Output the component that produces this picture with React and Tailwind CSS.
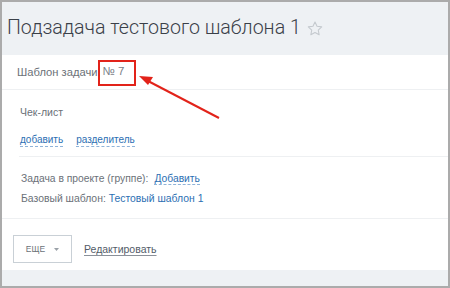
import React from "react";

export default function App() {
  return (
    <div className="relative w-[450px] h-[288px] box-border border-2 border-[#ababab] bg-[#eef1f4] flex flex-col overflow-hidden" style={{ fontFamily: '"Liberation Sans", Arial, sans-serif' }}>
      <div className="h-[53px] shrink-0 flex items-center pl-[5px] pb-[1px]">
        <span className="text-[19.6px] font-light text-[#3a4048]" style={{ fontFamily: 'Roboto, sans-serif' }}>
          Подзадача тестового шаблона 1
        </span>
        <svg className="ml-[6px] mt-[1px]" width="16" height="15" viewBox="0 0 24 23">
          <path d="M12 1.5l3.1 6.6 7.2.9-5.3 5 1.4 7.1L12 17.6l-6.4 3.5 1.4-7.1-5.3-5 7.2-.9z" fill="none" stroke="#c4c9ce" strokeWidth="1.6" strokeLinejoin="round" />
        </svg>
      </div>
      <div className="bg-white flex-1 flex flex-col">
        <div className="h-[35px] flex items-center pl-[15px] border-b border-[#eef0f2] text-[11.2px] text-[#6b7178]">
          <span>Шаблон задачи</span>
          <span className="ml-[5px] text-[11.5px] text-[#7a8088]">№ 7</span>
        </div>
        <div className="pl-[18px] pt-[15px] h-[66px] box-border">
          <div className="text-[10.5px] text-[#6b7178] leading-[14px]">Чек-лист</div>
          <div className="flex gap-[13px] mt-[14px] text-[10px] leading-[13px]">
            <span className="text-[#2c6fb3] border-b border-dashed border-[#8fb3d9]">добавить</span>
            <span className="text-[#2c6fb3] border-b border-dashed border-[#8fb3d9]">разделитель</span>
          </div>
        </div>
        <div className="ml-[17px] border-t border-[#eef0f2]" />
        <div className="pl-[19px] pt-[15px] h-[62px] box-border text-[10.3px] leading-[14px] border-b border-[#eef0f2]">
          <div className="text-[#6b7178]">
            Задача в проекте (группе):
            <span className="ml-[6px] text-[#2c6fb3] border-b border-dashed border-[#8fb3d9]">Добавить</span>
          </div>
          <div className="mt-[6px] text-[#6b7178] text-[10.4px]">
            Базовый шаблон: <span className="text-[#2c6fb3]">Тестовый шаблон 1</span>
          </div>
        </div>
        <div className="flex items-start pl-[11px] pt-[16px] h-[50px] box-border">
          <div className="w-[59px] h-[28px] border border-[#c9d0d6] flex items-center justify-center gap-[9px] text-[8.5px] text-[#6b7178]">
            <span>ЕЩЕ</span>
            <svg width="5" height="3" viewBox="0 0 5 3"><path d="M0 0h5L2.5 3z" fill="#9aa1a8" /></svg>
          </div>
          <span className="ml-[12px] mt-[7px] text-[10.5px] text-[#535c69] underline underline-offset-2 decoration-[#8a9099]">Редактировать</span>
        </div>
      </div>
      <div className="h-[16px] shrink-0" />
      <div className="absolute left-[96px] top-[58px] w-[38px] h-[26px] border-2 border-[#e2231a]" />
      <svg className="absolute left-0 top-0" width="450" height="288" viewBox="0 0 450 288">
        <line x1="217" y1="116" x2="146" y2="79" stroke="#e2231a" strokeWidth="2" />
        <path d="M137 74 L151 75 L146 83 Z" fill="#e2231a" />
      </svg>
    </div>
  );
}
